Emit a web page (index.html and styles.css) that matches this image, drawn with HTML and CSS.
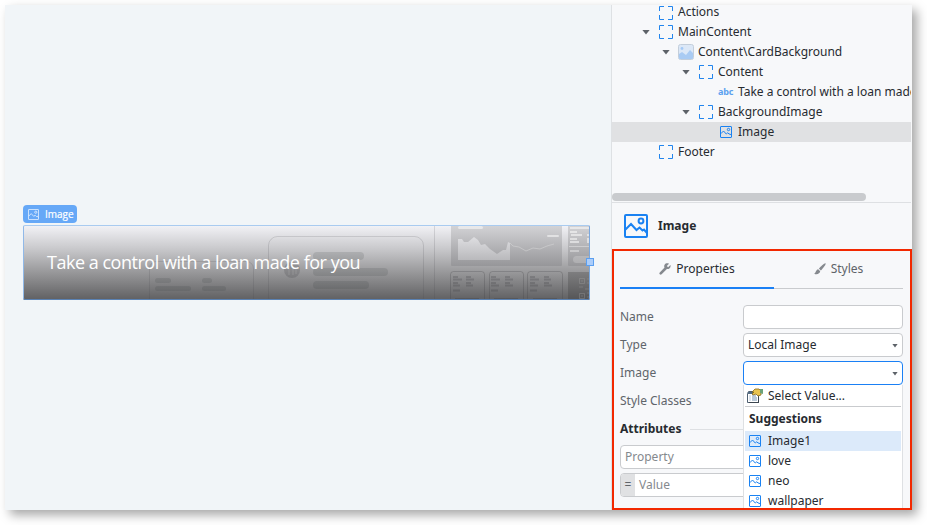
FILE: index.html
```html
<!DOCTYPE html>
<html lang="en">
<head>
<meta charset="utf-8">
<title>Image properties</title>
<link rel="stylesheet" href="styles.css">
</head>
<body>
<svg class="defs" aria-hidden="true">
  <symbol id="image" viewBox="0 0 24 24"><rect x="1" y="1" width="22" height="22" rx="1"/><circle cx="17" cy="7" r="2.400"/><path d="M1.500 15.500 7 10l5.500 6 3-2.500 3 3 1.500-1 3 3.500"/></symbol>
  <symbol id="holder" viewBox="0 0 14 14"><path d="M.5 5V.5H5M9 .5h4.500V5M13.500 9v4.500H9M5 13.500H.5V9"/></symbol>
</svg>
<div class="window">
  <main class="canvas">
    <div class="badge"><svg class="badge-icon"><use href="#image"/></svg>Image</div>
    <div class="card">
      <svg class="art" viewBox="0 0 567 75">
        <defs>
          <linearGradient id="fade" x2="0" y2="1"><stop offset="0" stop-color="#f3f3f7"/><stop offset=".3" stop-color="#cbcbce"/><stop offset=".65" stop-color="#959597"/><stop offset="1" stop-color="#606062"/></linearGradient>
          <linearGradient id="chart" x2="0" y2="1"><stop offset="0" stop-color="#d4d4d7"/><stop offset="1" stop-color="#969699"/></linearGradient>
          <linearGradient id="area" x2="0" y2="1"><stop offset="0" stop-color="#dedee1"/><stop offset="1" stop-color="#b9b9bc"/></linearGradient>
        </defs>
        <rect width="567" height="75" fill="url(#fade)"/>
        <g fill="none" stroke="#45464c" stroke-opacity=".16">
          <rect x="126.500" y="36.500" width="104" height="50" rx="7"/>
          <rect x="245.500" y="11.500" width="155" height="70" rx="9"/>
          <path d="M411.500 0v75"/>
        </g>
        <g fill="#35363c" fill-opacity=".14">
          <rect x="132" y="53" width="16" height="5" rx="2.500"/><rect x="179" y="53" width="10" height="5" rx="2.500"/>
          <rect x="132" y="61" width="36" height="5" rx="2.500"/><rect x="179" y="61" width="24" height="5" rx="2.500"/>
          <circle cx="269" cy="45" r="8" fill-opacity=".2"/>
          <rect x="290" y="27" width="51" height="8" rx="4"/><rect x="290" y="43" width="75" height="8" rx="4"/><rect x="290" y="56" width="56" height="8" rx="4"/>
        </g>
        <path d="M266 41v9M270 41v9M273 42v7" stroke="#bbb" stroke-opacity=".3"/>
        <path d="M428 0h111v40q0 1-1 1H429q-1 0-1-1z" fill="url(#chart)"/>
        <path d="M545 0h22v41h-21q-1 0-1-1z" fill="url(#chart)"/>
        <path d="M435 35V14h4l2 3h4l6-5 4 3 3 5 4-1 5 5 7 5 6-4h3l2-8 2 1v17z" fill="url(#area)"/>
        <path d="m487 18 3 3 6 1 7 4 7-3 7 1 7-3 7-2" fill="none" stroke="#ddd" stroke-opacity=".45"/>
        <g fill="#fff" fill-opacity=".5">
          <rect x="435" y="1" width="25" height="3" rx="1.500"/><rect x="524" y="10" width="12" height="2" rx="1"/>
          <rect x="547" y="2" width="19" height="2"/><rect x="547" y="6" width="7" height="2"/><rect x="548" y="9" width="11" height="2"/><rect x="564" y="9" width="3" height="2"/>
          <rect x="547" y="13" width="7" height="2"/><rect x="547" y="16" width="9" height="2"/><rect x="564" y="13" width="3" height="5"/>
          <rect x="547" y="25" width="9" height="2" fill-opacity=".35"/><path d="M546 21h21v1h-21z" fill-opacity=".35"/><rect x="550" y="31" width="20" height="7" rx="3.500" fill-opacity=".2"/>
        </g>
        <g fill="none" stroke="#404044" stroke-opacity=".25">
          <rect x="427.500" y="46.500" width="34" height="35" rx="3"/><rect x="466.500" y="46.500" width="34" height="35" rx="3"/><rect x="504.500" y="46.500" width="35" height="35" rx="3"/>
        </g>
        <path d="M545 47h22v28h-22z" fill="#38383b" fill-opacity=".28"/>
        <g stroke="#2e2e32" stroke-opacity=".2" stroke-width="2" fill="none">
          <path d="M430 52h5M443 52h5M430 54.500h9M443 54.500h8M430 58h5M443 58h5M430 60.500h7M443 60.500h7M430 65.500h7"/>
          <path d="M468 52h5M482 52h5M468 54.500h9M482 54.500h8M468 58h5M482 58h5M468 60.500h8M482 60.500h8M468 65.500h7"/>
          <path d="M507 52h5M521 52h5M507 54.500h9M521 54.500h7M507 58h5M521 58h5M507 60.500h8M521 60.500h8M507 65.500h7"/>
          <path d="M432 73.500h24M471 73.500h24M510 73.500h24" stroke-width="1"/>
        </g>
        <g stroke="#aaa" stroke-opacity=".3" fill="none"><path d="M556.500 53.500h5v5h-5zM556.500 68.500h5v5h-5zM564 54h3M564 58h2M556 62h4M562 64h5M564 68h3M564 72h2M559 55v2M559 70v2"/></g>
      </svg>
      <div class="headline">Take a control with a loan made for you</div>
      <div class="handle"></div>
    </div>
  </main>
  <aside class="panel">
    <section class="tree">
      <div class="node d1"><i class="caret none"></i><svg class="holder"><use href="#holder"/></svg><span>Actions</span></div>
      <div class="node d1"><i class="caret"></i><svg class="holder"><use href="#holder"/></svg><span>MainContent</span></div>
      <div class="node d2"><i class="caret"></i><svg class="block" viewBox="0 0 16 16"><rect x=".5" y=".5" width="15" height="15" rx="2" fill="#dce8f7" stroke="#c3cedb"/><path d="M1 10 4 8l4 3 4-5 3 3v5q0 1-1 1H2q-1 0-1-1z" fill="#a9cbf3"/><circle cx="4" cy="4.500" r="1.400" fill="#a4caf7"/></svg><span>Content\CardBackground</span></div>
      <div class="node d3"><i class="caret"></i><svg class="holder"><use href="#holder"/></svg><span>Content</span></div>
      <div class="node d4"><i class="caret none"></i><b class="abc">abc</b><span>Take a control with a loan made for you</span></div>
      <div class="node d3"><i class="caret"></i><svg class="holder"><use href="#holder"/></svg><span>BackgroundImage</span></div>
      <div class="node d4 selected"><i class="caret none"></i><svg class="picture"><use href="#image"/></svg><span>Image</span></div>
      <div class="node d1"><i class="caret none"></i><svg class="holder"><use href="#holder"/></svg><span>Footer</span></div>
      <div class="scrollbar"></div>
    </section>
    <header class="title"><svg class="title-icon"><use href="#image"/></svg><span>Image</span></header>
    <section class="props">
      <nav class="tabs">
        <div class="tab active"><svg class="tab-icon" viewBox="0 0 12 12"><path d="M1.700 10.300 6.500 5.500" stroke="#85898e" stroke-width="2.600" stroke-linecap="round"/><path d="M10 .7 7.800 2.900l1.300 1.300 2.300-2.300c.8 2-1 4.500-3.400 4.200-2.500-.3-3.500-2.600-2.400-4.400C6.500.3 8.300-.1 10 .7z" fill="#85898e"/></svg><span>Properties</span></div>
        <div class="tab"><svg class="tab-icon" viewBox="0 0 12 12"><path d="M11.600.4c.7.700-3 5.600-4.800 7L4.900 5.600C6.300 4 10.900-.3 11.600.4zM4.200 6.300l2 2C5.900 10.600 3 12 .2 10.700 2.100 10 1.700 6.700 4.200 6.300z" fill="#85898e"/></svg><span>Styles</span></div>
      </nav>
      <div class="form">
        <div class="row"><label>Name</label><div class="field"></div></div>
        <div class="row"><label>Type</label><div class="field"><span>Local Image</span><i class="arrow"></i></div></div>
        <div class="row"><label>Image</label><div class="field focus"><i class="arrow"></i>
          <div class="menu">
            <div class="choose"><svg class="choose-icon" viewBox="0 0 16 16"><path d="M1.500 3.500h10v11H.5v-9z" fill="#fff" stroke="#4f6173"/><path d="M1 4h11v2H1z" fill="#536b82"/><path d="M2.500 8h1M5 8h4M2.500 10h1M5 10h5M2.500 12h1M5 12h5" stroke="#7895b2"/><path d="M11.500 8v7M2 14.500h10" stroke="#3c4650"/><path d="m5 4 3-3h4l2 2v4l-3 1-2-2-3 1-1-1 2-2z" fill="#e9c34e" stroke="#86681b" stroke-width=".8"/><path d="M13 1h3v5l-3-1z" fill="#6ca278"/></svg><span>Select Value...</span></div>
            <div class="group">Suggestions</div>
            <div class="option on"><svg class="picture"><use href="#image"/></svg><span>Image1</span></div>
            <div class="option"><svg class="picture"><use href="#image"/></svg><span>love</span></div>
            <div class="option"><svg class="picture"><use href="#image"/></svg><span>neo</span></div>
            <div class="option"><svg class="picture"><use href="#image"/></svg><span>wallpaper</span></div>
          </div></div></div>
        <div class="row"><label>Style Classes</label></div>
        <div class="row attributes"><b>Attributes</b><hr></div>
        <div class="row"><div class="field wide hint">Property</div></div>
        <div class="row"><div class="field wide value hint"><span class="equals">=</span>Value</div></div>
      </div>
    </section>
  </aside>
</div>
</body>
</html>
```
FILE: styles.css
```css
* { box-sizing: border-box; }
body { margin: 0; padding: 5px; width: 927px; height: 525px; overflow: hidden; background: #fff; font: 12px/20px "Noto Sans", sans-serif; color: #272b30; }
.defs { position: absolute; width: 0; height: 0; }
svg { display: block; flex: none; }
.window { display: flex; width: 907px; height: 505px; background: #f7f8fa; box-shadow: 5px 5px 10px rgba(0,0,0,.35); }

.canvas { width: 606px; padding: 200px 0 0 18px; background: #f1f5f8; }
.badge { display: flex; align-items: center; gap: 6px; width: 54px; height: 18px; padding-left: 5px; margin-bottom: 2px; border-radius: 4px; background: #66a8f7; color: #fff; font: 10px/16px "Open Sans", sans-serif; -webkit-text-stroke: .2px #fff; }
.badge-icon { width: 11px; height: 11px; fill: none; stroke: #e4f0ff; stroke-width: 1.800; }
.card { position: relative; width: 567px; height: 75px; display: grid; align-items: center; }
.card::after { content: ""; position: absolute; inset: 0; border: 1px solid; border-color: #a9cbf0 #7ba8de #5a82b4 #91b9e8; border-radius: 2px; }
.art { grid-area: 1 / 1; width: 567px; height: 75px; border-radius: 2px; }
.headline { grid-area: 1 / 1; z-index: 1; padding: 0 0 2px 24px; color: #fff; font: 18px/24px "Open Sans", sans-serif; letter-spacing: -.48px; white-space: nowrap; }
.handle { position: absolute; z-index: 2; right: -4px; top: 33px; width: 8px; height: 8px; background: #abcdfa; border: 1px solid #5b9ff0; }

.panel { width: 301px; border-left: 1px solid #dee1e4; }
.tree { display: flex; flex-direction: column; height: 198px; width: 299px; overflow: hidden; border-bottom: 1px solid #dee0e3; }
.node { display: flex; align-items: center; flex: none; height: 20px; white-space: nowrap; }
.node:first-child { height: 17px; line-height: 14px; }
.node:first-child .holder { margin-top: -2px; }
.node:first-child span { margin-top: -3px; }
.d1 { padding-left: 30px; }
.d2 { padding-left: 50px; }
.d3 { padding-left: 70px; }
.d4 { padding-left: 90px; }
.selected { background: #e0e1e3; }
.caret { width: 8px; height: 5px; flex: none; margin-right: 8px; background: #5d6268; clip-path: polygon(0 0, 100% 0, 50% 100%); }
.caret.none { background: none; }
.holder { width: 14px; height: 14px; margin: 0 5px 0 1px; fill: none; stroke: #2185ee; stroke-width: 1; }
.block { width: 16px; height: 16px; margin-right: 4px; }
.picture { width: 12px; height: 12px; margin: 0 6px 0 2px; fill: none; stroke: #1a82f2; stroke-width: 2; }
.abc { flex: none; width: 20px; color: #5ba1ef; font-size: 9px; line-height: 20px; letter-spacing: -.2px; }
.scrollbar { width: 254px; height: 8px; flex: none; margin-top: 31px; border-radius: 4px; background: #c9cbce; }
.title { display: flex; align-items: center; gap: 10px; height: 46px; padding-left: 12px; font-weight: 700; }
.title-icon { width: 24px; height: 24px; fill: none; stroke: #1a82f2; stroke-width: 2; }

.props { width: 300px; height: 261px; overflow: hidden; border: 2px solid #f22800; padding: 0 7px 0 6px; }
.tabs { display: flex; height: 38px; box-shadow: inset 0 -1px #c9cbce; }
.tab { display: flex; align-items: center; justify-content: center; gap: 5px; width: 129px; flex: 1; padding-bottom: 3px; color: #5e6369; }
.tab.active { flex: none; width: 154px; border-bottom: 2px solid #1a80f5; padding-bottom: 1px; color: #272b30; }
.tab-icon { width: 12px; height: 12px; fill: none; }
.form { display: grid; gap: 4px; padding-top: 16px; }
.row { display: flex; align-items: center; height: 24px; }
label { width: 123px; color: #60656b; }
.field { position: relative; display: flex; align-items: center; width: 160px; height: 24px; padding-left: 4px; border: 1px solid #c9cbce; border-radius: 4px; background: #fff; }
.focus { border-color: #1a80f5; }
.arrow { width: 6px; height: 4px; margin: 1px 4px 0 auto; background: #5d6268; clip-path: polygon(0 0, 100% 0, 50% 100%); }
.wide { width: 283px; }
.hint { color: #85898e; }
.value { padding: 0; }
.equals { width: 14px; line-height: 22px; margin-right: 4px; text-align: center; background: #e0e1e3; color: #60656b; border-radius: 3px 0 0 3px; }
.attributes { gap: 9px; }
hr { flex: 1; margin: 0; border: 0; border-top: 1px solid #dee0e3; }

.menu { position: absolute; z-index: 3; top: 23px; left: -1px; width: 160px; height: 134px; padding: 0 1px; background: #fff; border: 1px solid #dee0e3; border-top: 0; }
.choose, .option { display: flex; align-items: center; height: 20px; }
.choose { height: 22px; padding-left: 2px; gap: 5px; border-bottom: 1px solid #c9cbce; }
.choose-icon { width: 16px; height: 16px; }
.group { height: 24px; line-height: 24px; padding-left: 4px; font-weight: 700; }
.option { padding-left: 2px; }
.option .picture { margin-right: 7px; }
.option.on { background: #dceafa; }
```
